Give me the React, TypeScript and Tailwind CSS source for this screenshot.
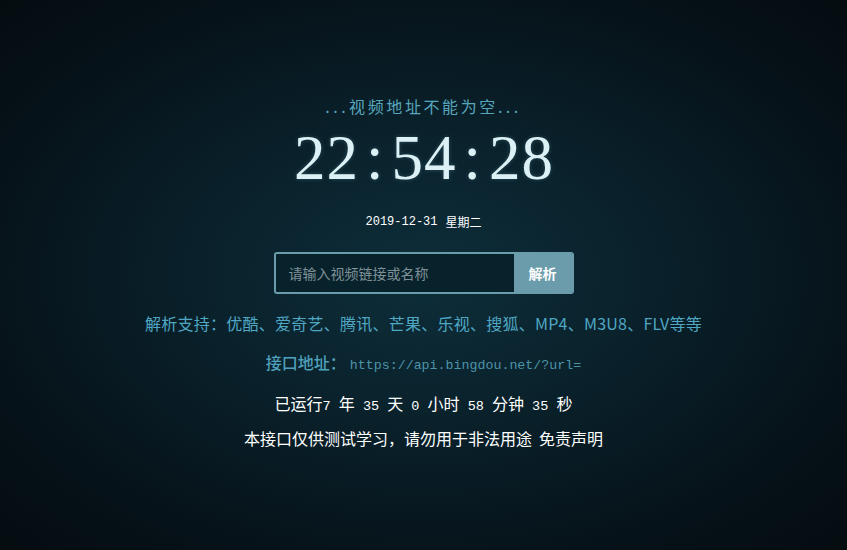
import React from "react";

const mono = '"Liberation Mono", "DejaVu Sans Mono", monospace';
const cjk = '"Noto Sans CJK SC", "Noto Sans", sans-serif';

function N({ children }: { children: React.ReactNode }) {
  return (
    <span style={{ fontFamily: mono }} className="text-[13.5px]">
      {children}
    </span>
  );
}

export default function App() {
  const clock = "22:54:28".split("");
  return (
    <div
      className="w-full h-[550px] overflow-hidden bg-[radial-gradient(ellipse_at_center,#0d2e3a_0%,#0a222c_35%,#061219_75%,#040c10_100%)] flex flex-col items-center"
      style={{ fontFamily: cjk }}
    >
      <div className="mt-[96px] h-[20px] leading-[20px] text-[16px] tracking-[2.6px] text-[#58a6bd]">
        <span className="tracking-[3.5px]">...</span>视频地址不能为空<span className="tracking-[3.5px]">...</span>
      </div>
      <div
        className="mt-[10px] h-[64px] leading-[64px] text-[63px] text-[#dcf1f5] flex"
        style={{
          fontFamily: '"Liberation Serif", "Times New Roman", serif',
          textShadow: "0 0 4px rgba(140,210,230,0.25)",
        }}
      >
        {clock.map((c, i) => (
          <span key={i} className="inline-block w-[32.5px] text-center">
            {c}
          </span>
        ))}
      </div>
      <div className="mt-[24px] h-[16px] leading-[16px] text-[12px] text-white flex items-center">
        <span style={{ fontFamily: mono }}>2019-12-31</span>
        <span className="ml-[8px]">星期二</span>
      </div>
      <div className="mt-[22px] flex h-[42px] w-[300px] rounded-[3px] border-2 border-[#6a9cab] overflow-hidden">
        <div className="flex-1 bg-[#08222c] flex items-center pl-[13px] text-[14px] text-[#7f9197]">
          请输入视频链接或名称
        </div>
        <div className="w-[58px] bg-[#6a9cab] flex items-center justify-center text-[14px] font-bold text-white">
          解析
        </div>
      </div>
      <div className="mt-[17px] h-[24px] leading-[24px] text-[16px] tracking-[0.25px] text-[#4fa7c4] whitespace-nowrap">
        解析支持：优酷、爱奇艺、腾讯、芒果、乐视、搜狐、MP4、M3U8、FLV等等
      </div>
      <div className="mt-[15px] h-[24px] leading-[24px] whitespace-nowrap flex items-baseline">
        <span className="text-[16px] font-medium text-[#4fa0bb]">接口地址：</span>
        <span
          className="ml-[4px] text-[13.3px] text-[#4d93a8]"
          style={{ fontFamily: mono }}
        >
          https://api.bingdou.net/?url=
        </span>
      </div>
      <div className="mt-[17px] h-[24px] leading-[24px] text-[16px] text-white whitespace-nowrap">
        已运行<N>7 </N>年<N> 35 </N>天<N> 0 </N>小时<N> 58 </N>分钟<N> 35 </N>秒
      </div>
      <div className="mt-[11px] h-[24px] leading-[24px] text-[16px] text-white whitespace-nowrap">
        本接口仅供测试学习，请勿用于非法用途<span className="inline-block w-[7px]"></span>免责声明
      </div>
    </div>
  );
}
